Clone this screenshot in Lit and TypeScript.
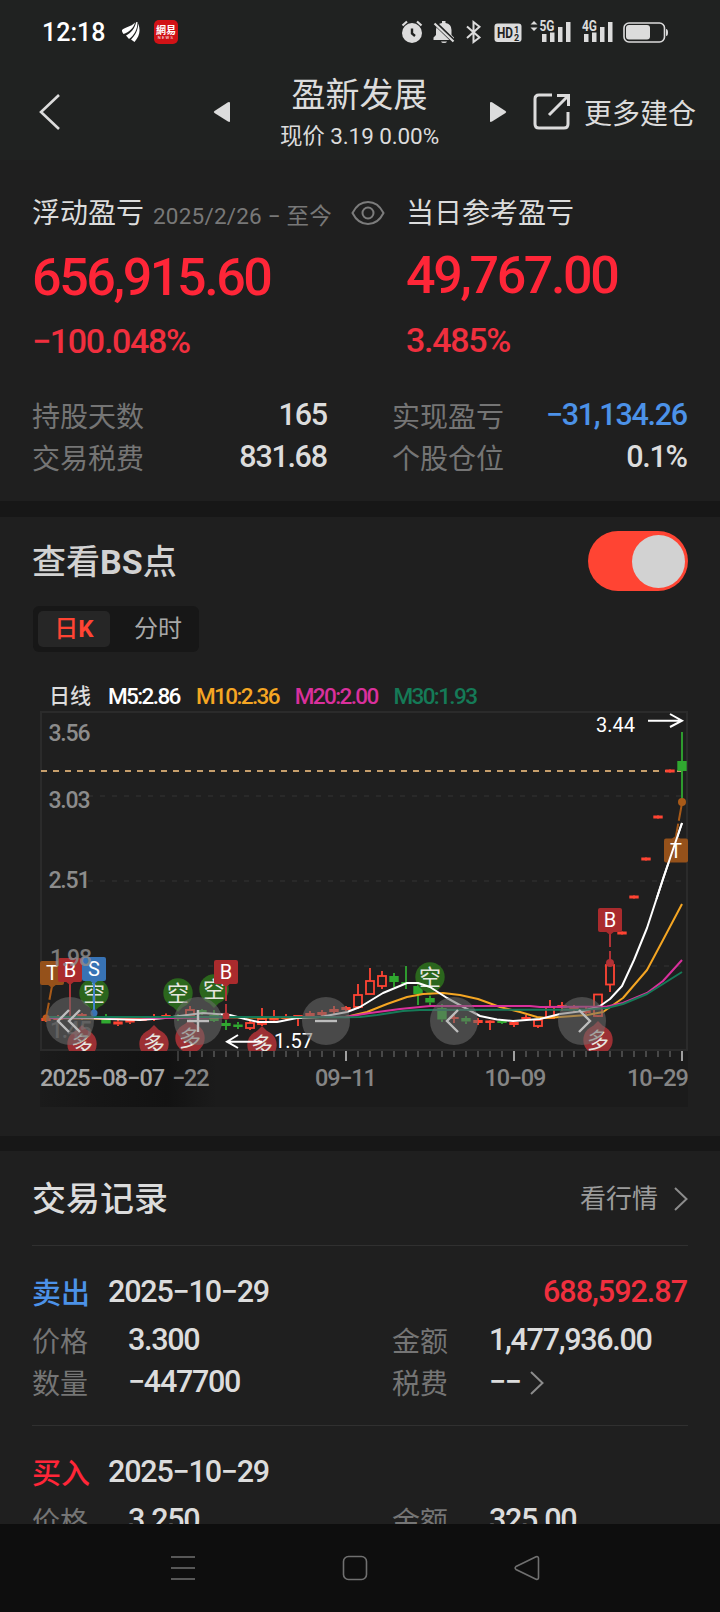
import { LitElement, html, svg, css } from "lit";
import { customElement } from "lit/decorators.js";

const RED = "#ff4433";
const GREEN = "#30a830";

// x, body top, body bottom, wick top, wick bottom, kind (r = hollow red, g = green)
type Candle = [number, number, number, number, number, "r" | "g"];
const candles: Candle[] = [
  [46, 1018, 1021, 1016, 1022, "r"],
  [58, 1017, 1020, 1015, 1021, "r"],
  [70, 1016, 1019, 1014, 1021, "r"],
  [82, 1014, 1017, 1013, 1020, "r"],
  [106, 1019, 1023.5, 1014, 1023.5, "g"],
  [118, 1021.5, 1024.5, 1019, 1026, "r"],
  [130, 1019.5, 1022.5, 1018, 1024, "r"],
  [142, 1018.5, 1021, 1017, 1021, "r"],
  [154, 1016, 1018.5, 1014, 1021, "r"],
  [166, 1015, 1017.5, 1013.5, 1018, "r"],
  [178, 1017, 1019, 1014, 1021, "g"],
  [190, 1010, 1016, 1006, 1016, "r"],
  [202, 1010, 1013, 1009, 1015, "g"],
  [214, 1015, 1021, 1010, 1022, "g"],
  [226, 1023, 1026, 1020, 1030, "g"],
  [238, 1024.5, 1027, 1022, 1029, "g"],
  [250, 1023, 1028, 1021, 1030, "r"],
  [262, 1019, 1024, 1008, 1026, "r"],
  [274, 1018, 1020.5, 1010, 1023, "r"],
  [286, 1016.5, 1019, 1014, 1021, "r"],
  [298, 1015, 1018, 1015, 1026, "r"],
  [310, 1013, 1016, 1011, 1017, "r"],
  [322, 1012, 1015, 1010, 1016, "r"],
  [334, 1009, 1012, 1006, 1014, "r"],
  [346, 1007, 1010, 1006, 1011, "r"],
  [358, 995, 1007, 984, 1009, "r"],
  [370, 981, 994, 968, 994, "r"],
  [382, 976, 986, 971, 989, "r"],
  [394, 976, 982, 973, 987, "g"],
  [406, 982, 984, 966, 989, "g"],
  [418, 986, 994, 984, 1005, "g"],
  [430, 998, 1002.5, 996, 1007, "g"],
  [442, 1008, 1019.5, 1004, 1022, "g"],
  [454, 1017, 1019, 1015, 1023, "r"],
  [466, 1018, 1021.5, 1016, 1024, "g"],
  [478, 1020, 1023, 1018, 1025, "r"],
  [490, 1020.5, 1023, 1020, 1030, "r"],
  [502, 1021, 1023, 1020, 1024, "g"],
  [514, 1022, 1025, 1022, 1027, "r"],
  [526, 1017, 1019.5, 1015, 1020, "r"],
  [538, 1020, 1026, 1020, 1028, "r"],
  [550, 1007, 1018, 1000, 1018, "r"],
  [562, 1005, 1008, 1002, 1011, "r"],
  [574, 1007, 1010, 1005, 1012, "r"],
  [586, 1010, 1013, 1007, 1014, "r"],
  [598, 994.5, 1016, 994, 1017, "r"],
  [610, 965, 984.5, 961, 992, "r"],
  [622, 931.5, 934.5, 933, 933, "r"],
  [634, 895.5, 898.5, 897, 897, "r"],
  [646, 857.5, 860.5, 859, 859, "r"],
  [658, 815.5, 818.5, 817, 817, "r"],
  [670, 769.5, 772.5, 771, 771, "r"],
  [682, 761, 771, 732, 800, "g"],
];

const averages = [
  { color: "#f5a623", pts: "48,1018 120,1019 200,1017 260,1017.5 345,1017 350,1016 367,1012 387,1004 407,997 423,994 443,993 460,995 478,999 500,1007 520,1012 537,1017 547,1018 587,1015 603,1012 623,998 647,970 663,940 682,904" },
  { color: "#ffffff", pts: "48,1018 90,1018 110,1019 140,1020 165,1018 187,1015 203,1013 230,1015 245,1019 258,1022 277,1022 297,1018 320,1017 347,1012 360,1007 383,993 407,983 418,983 430,987 447,998 467,1009 480,1016 497,1019.5 513,1021 540,1019 560,1014 583,1011 600,1006 610,999 622,986 634,960 647,928 663,879 682,823" },
  { color: "#d9309c", pts: "48,1018 100,1017 170,1018 240,1017 345,1017 370,1013 400,1009 430,1006 530,1006 540,1007 607,1006.5 623,1003 647,993 663,981 682,960" },
  { color: "#157a57", pts: "48,1017 200,1017 345,1017.3 360,1017 377,1015 403,1011 420,1010 500,1009.8 585,1009.8 607,1008 623,1004 647,994 682,972" },
];

@customElement("trade-chart")
export class TradeChart extends LitElement {
  static styles = css`
    :host { display: block; height: 400px; }
    svg { display: block; }
    text { font-family: Roboto, "Noto Sans CJK SC", sans-serif; }
    .price { font-size: 23px; fill: #8c8c8c; letter-spacing: -1.2px; font-weight: 500; }
    .date { font-size: 23.5px; fill: #858585; letter-spacing: -1.2px; font-weight: 500; }
    .date.first { fill: #a5a5a5; letter-spacing: -0.9px; }
    .tip { font-size: 20px; fill: #fff; }
    .flag { font-size: 20px; fill: #fff; text-anchor: middle; }
    .pin { font-size: 22px; fill: #e6e6e0; text-anchor: middle; }
  `;

  candle([x, top, bottom, high, low, kind]: Candle) {
    const color = kind === "r" ? RED : GREEN;
    const h = bottom - top;
    const hollow = kind === "r" && h > 4;
    return svg`
      <path d="M${x} ${high}V${top}M${x} ${bottom}V${low}" stroke=${color} stroke-width="2" opacity=".9"/>
      ${hollow
        ? svg`<rect x=${x - 4} y=${top} width="8" height=${h} fill="none" stroke=${color} stroke-width="1.8"/>`
        : svg`<rect x=${x - 4.7} y=${top} width="9.4" height=${h} fill=${color}/>`}`;
  }

  flag(x: number, y: number, label: string, color: string, up = false) {
    const s = up ? -1 : 1;
    return svg`
      <rect x=${x - 12} y=${y - 12} width="24" height="24" rx="2" fill=${color}/>
      <path d="M${x - 5} ${y + s * 11}L${x} ${y + s * 15}L${x + 5} ${y + s * 11}" fill=${color}/>
      <text class="flag" x=${x} y=${y + 7.2}>${label}</text>`;
  }

  shortPin(x: number, y: number) {
    return svg`
      <circle cx=${x} cy=${y} r="14.7" fill="#2b661d"/>
      <path d="M${x - 8} ${y + 11}L${x} ${y + 19}L${x + 8} ${y + 11}" fill="#2b661d"/>
      <text class="pin" x=${x} y=${y + 8}>空</text>`;
  }

  longPin(x: number, y: number) {
    return svg`
      <circle cx=${x} cy=${y} r="14.7" fill="#9c3034"/>
      <path d="M${x - 8} ${y - 11}L${x} ${y - 19}L${x + 8} ${y - 11}" fill="#9c3034"/>
      <text class="pin" x=${x} y=${y + 8}>多</text>`;
  }

  control(x: number, d: string) {
    return svg`
      <circle cx=${x} cy="1021" r="24" fill="#6c6c6c" fill-opacity=".55"/>
      <path d=${d} transform="translate(${x} 1021)" fill="none" stroke="#bdbdbd" stroke-width="2.4"/>`;
  }

  render() {
    const ticks = Array.from({ length: 43 }, (_, i) => 178 + i * 12);
    const major = [178, 346, 514, 682];
    return html`<svg width="720" height="400" viewBox="0 710 720 400">
      <defs>
        <linearGradient id="shade">
          <stop offset="0" stop-color="#121212" stop-opacity="0"/>
          <stop offset=".3" stop-color="#121212" stop-opacity=".5"/>
          <stop offset=".72" stop-color="#121212" stop-opacity="1"/>
          <stop offset="1" stop-color="#121212" stop-opacity="0"/>
        </linearGradient>
        <clipPath id="plot"><rect x="40" y="711" width="650" height="340"/></clipPath>
      </defs>
      <rect x="40" y="1051" width="648" height="56" fill="#1b1b1b"/>
      <rect x="40" y="1051" width="176" height="56" fill="url(#shade)"/>
      <rect x="41" y="712" width="646" height="338" fill="none" stroke="#2b2b2b" stroke-width="2"/>
      <path d="M88 796H687M88 881H687M88 966H687" stroke="#2e2e2e" stroke-width="1.6" stroke-dasharray="5 7"/>
      <path d="M41 771H682" stroke="#c79f6c" stroke-width="2" stroke-dasharray="6 6"/>
      ${ticks.map((x) =>
        major.includes(x)
          ? svg`<path d="M${x} 1051V1061" stroke=${x === 178 ? "#3a3a3a" : "#a0a0a0"} stroke-width="2"/>`
          : svg`<path d="M${x} 1051V1057" stroke="#686868" stroke-width="1.2"/>`
      )}
      <g clip-path="url(#plot)">
        ${candles.map((c) => this.candle(c))}
        ${[[94, 993], [178, 993], [214, 989], [430, 977]].map(([x, y]) => this.shortPin(x, y))}
        ${[[82, 1044], [154, 1044], [190, 1038], [262, 1045], [598, 1040]].map(([x, y]) => this.longPin(x, y))}
        ${averages.map((a) => svg`<polyline points=${a.pts} fill="none" stroke=${a.color} stroke-width="2" stroke-linejoin="round"/>`)}
      </g>
      <path d="M52 986L46 1018" stroke="#a85a18" stroke-width="2" stroke-dasharray="14 3"/>
      <circle cx="46" cy="1018" r="3.5" fill="#c05a1c"/>
      <path d="M70 984V1016" stroke="#b03236" stroke-width="2"/>
      <path d="M94 982V1012" stroke="#4286d0" stroke-width="2"/>
      <circle cx="94" cy="1013" r="3.5" fill="#3873b5"/>
      <path d="M226 985V1015" stroke="#b03236" stroke-width="2" stroke-dasharray="16 3"/>
      <circle cx="226" cy="1016" r="3.5" fill="#b03236"/>
      <path d="M610 934V964" stroke="#b03236" stroke-width="2" stroke-dasharray="13 4"/>
      <circle cx="610" cy="963" r="4" fill="#b03236"/>
      <path d="M682 803L676 836" stroke="#a85a18" stroke-width="2" stroke-dasharray="18 3"/>
      <circle cx="682" cy="802" r="4" fill="#a85a18"/>
      ${this.flag(52, 973, "T", "#95511a")}
      ${this.flag(70, 970, "B", "#aa2b2d")}
      ${this.flag(94, 969, "S", "#3873b5")}
      ${this.flag(226, 972, "B", "#aa2b2d")}
      ${this.flag(610, 920, "B", "#aa2b2d")}
      ${this.flag(676, 850.5, "T", "#95511a", true)}
      <path d="M656.500 899L663 879L682 823" fill="none" stroke="#fff" stroke-width="2"/>
      <text class="price" x="48.500" y="741">3.56</text>
      <text class="price" x="48.500" y="808">3.03</text>
      <text class="price" x="48.500" y="888">2.51</text>
      <text class="price" x="50" y="966" opacity=".85">1.98</text>
      <text class="price" x="50" y="1038" opacity=".5">1.45</text>
      <path d="M648 720.7H681M670 714L682 720.7L670 727" stroke="#fff" stroke-width="2" fill="none"/>
      <text class="tip" x="596" y="732">3.44</text>
      <path d="M228 1041.7H262M238 1035L227 1041.7L238 1048" stroke="#fff" stroke-width="2" fill="none"/>
      <text class="tip" x="274" y="1048">1.57</text>
      ${this.control(70, "M-1 -11L-12 0L-1 11M10 -11L-1 0L10 11")}
      ${this.control(198, "M-11 0H11M0 -11V11")}
      ${this.control(326, "M-11 0H11")}
      ${this.control(454, "M4 -11L-7 0L4 11")}
      ${this.control(582, "M-3 -11L8 0L-3 11")}
      <text class="date" x="172" y="1086">−22</text>
      <text class="date first" x="40" y="1086">2025−08−07</text>
      <text class="date" x="315" y="1086">09−11</text>
      <text class="date" x="484.500" y="1086">10−09</text>
      <text class="date" x="627" y="1086">10−29</text>
    </svg>`;
  }
}

@customElement("status-bar")
export class StatusBar extends LitElement {
  static styles = css`
    :host { display: flex; align-items: center; height: 64px; padding: 0 52px 0 42px; box-sizing: border-box; justify-content: space-between; }
    .left { display: flex; align-items: center; }
    .clock { font-size: 25px; font-weight: 500; color: #fff; letter-spacing: 0px; width: 80px; }
    .news { width: 24px; height: 24px; border-radius: 5px; background: #d11216; color: #fff; margin-left: 14px; display: flex; flex-direction: column; align-items: center; justify-content: center; }
    .news b { font-size: 10px; line-height: 11px; font-weight: 700; }
    .news i { font-size: 4px; line-height: 4px; font-style: normal; letter-spacing: 1.4px; }
    svg { display: block; }
    text { font-family: Roboto, sans-serif; font-weight: 700; }
  `;
  render() {
    return html`
      <div class="left">
        <span class="clock">12:18</span>
        <svg width="18" height="20" viewBox="0 0 18 20" fill="#fff">
          <path d="M0 8C3 5 9 5 13 .5C12 6 7 10 1.500 12C.2 10.500 -.3 9 0 8Z"/>
          <path d="M4 13.500C9 11 13 6.500 14 .3L15.500 0C15.500 7.500 12.500 13 7 17Z"/>
          <path d="M9 17.500C13.500 13 16 8 16.300 1.500C18.800 9 17.500 14 12.500 20Z"/>
        </svg>
        <span class="news"><b>網易</b><i>NEWS</i></span>
      </div>
      <svg width="268" height="26" viewBox="400 19 268 26" fill="#dcdcdc">
        <circle cx="412" cy="33" r="10"/>
        <path d="M412 28.500V33.500L415 36" fill="none" stroke="#202221" stroke-width="2.400"/>
        <path d="M402.500 25.500L407 21.500M421.500 25.500L417 21.500" stroke="#dcdcdc" stroke-width="2.200"/>
        <path d="M433.500 40V37.500L436 35V30Q436 24 442 23V21H445.500V23Q451.500 24 451.500 30V35L454 37.500V40Z"/>
        <path d="M441 41.500H447Q446.500 43 444 43T441 41.500Z"/>
        <path d="M436 24L454 41.500" stroke="#202221" stroke-width="4.500"/>
        <path d="M434.500 23.500L453.500 41.500" stroke="#dcdcdc" stroke-width="2.200"/>
        <path d="M467 26.500L479.500 37.500L473.500 42V22L479.500 26.800L467 38" fill="none" stroke="#dcdcdc" stroke-width="2"/>
        <rect x="494.500" y="23.500" width="27" height="18.500" rx="3"/>
        <text x="497" y="38" font-size="14" fill="#202221" textLength="16" lengthAdjust="spacingAndGlyphs">HD</text>
        <text x="514" y="32.500" font-size="9" fill="#202221">1</text>
        <text x="514" y="40.500" font-size="9" fill="#202221">2</text>
        <path d="M530.500 24.500L534 21L537.500 24.500ZM530.500 27.500L534 31L537.500 27.500Z"/>
        <text x="539.500" y="31" font-size="14" textLength="15" lengthAdjust="spacingAndGlyphs">5G</text>
        <text x="582" y="31" font-size="14" textLength="15" lengthAdjust="spacingAndGlyphs">4G</text>
        <path d="M542 34H546.500V42H542ZM550 32.500H554.500V42H550ZM558 27H562.500V42H558ZM566 22H570.500V42H566Z"/>
        <path d="M584 34H588.500V42H584ZM592 32.500H596.500V42H592ZM600 27H604.500V42H600ZM608 22H612.500V42H608Z"/>
        <rect x="624" y="23" width="40.500" height="19" rx="5" fill="none" stroke="#dcdcdc" stroke-width="1.600"/>
        <rect x="626" y="25" width="24" height="14.500" rx="3"/>
        <path d="M666 29Q668 29 668 32.500T666 36Z"/>
      </svg>`;
  }
}

interface Trade { side: string; sell: boolean; date: string; profit: string; price: string; amount: string; count: string; }

const trades: Trade[] = [
  { side: "卖出", sell: true, date: "2025−10−29", profit: "688,592.87", price: "3.300", amount: "1,477,936.00", count: "−447700" },
  { side: "买入", sell: false, date: "2025−10−29", profit: "", price: "3.250", amount: "325.00", count: "" },
];

@customElement("app-root")
export class AppRoot extends LitElement {
  static styles = css`
    :host { display: flex; flex-direction: column; width: 720px; height: 1612px; overflow: hidden; background: #1f1f1f; color: #dcdcdc; font-family: Roboto, "Noto Sans CJK SC", sans-serif; line-height: 1; white-space: nowrap; }
    * { box-sizing: border-box; }
    svg { display: block; }
    .head { height: 160px; background: #202221; flex: none; }
    .bar { display: grid; grid-template-columns: 213px 24px 243px 36px 1fr; height: 96px; align-items: center; }
    .back { padding-left: 39px; }
    .name { text-align: center; padding: 0 0 0 2px; }
    .name h1 { margin: 0; font-size: 34px; font-weight: 400; line-height: 44px; padding-top: 2px; padding-bottom: 2px; }
    .name p { margin: 0; font-size: 22.500px; line-height: 34px; font-weight: 400; letter-spacing: -0.1px; }
    .more { display: flex; align-items: center; gap: 13px; font-size: 28px; padding-left: 17px; padding-top: 6px; }
    .more svg { margin-top: -6px; }
    .summary { height: 341px; flex: none; padding: 32px 32px 0; }
    .top { display: grid; grid-template-columns: 374px 1fr; height: 172px; }
    .label { display: flex; align-items: center; font-size: 28px; height: 44px; }
    .label .since { font-size: 22.500px; color: #787878; margin-left: 9px; padding-top: 5px; letter-spacing: 0.2px; }
    .label svg { margin-left: 19px; margin-top: -3px; }
    .big { font-size: 52px; font-weight: 500; color: #ff2638; letter-spacing: -2.400px; height: 82px; line-height: 84px; }
    .right .big { line-height: 80px; height: 81px; }
    .pct { font-size: 34px; font-weight: 500; color: #f02f3e; letter-spacing: -1.300px; height: 46px; line-height: 46px; }
    .facts { display: grid; grid-template-columns: 296px 296px; column-gap: 64px; padding-top: 33px; }
    .fact { display: flex; justify-content: space-between; align-items: center; height: 42px; font-size: 28px; color: #757575; }
    .num { font-size: 30.500px; font-weight: 500; color: #dcdcdc; letter-spacing: -1.300px; }
    .fact .num { margin-top: -5px; padding-right: 1.300px; }
    .num.blue { color: #4c92e8; }
    .strip { height: 15.500px; background: #171717; flex: none; }
    .chart { height: 619px; flex: none; }
    .title { display: flex; justify-content: space-between; align-items: center; margin: 0 32px; }
    .title h2 { margin: 0; font-size: 34px; font-weight: 500; padding-top: 2px; }
    .title h2 b { font-weight: 700; }
    .chart .title { height: 89px; color: #d2d2d2; }
    .toggle { width: 100px; height: 60px; border-radius: 30px; background: #ff4433; display: flex; align-items: center; justify-content: flex-end; padding-right: 3px; }
    .knob { width: 53px; height: 53px; border-radius: 50%; background: #d2d2d2; }
    .tabs { display: flex; align-items: center; gap: 12px; width: 166px; height: 46px; margin-left: 33px; padding: 0 5px; border-radius: 6px; background: #171717; font-size: 24px; color: #a8a8a8; }
    .tab { width: 72px; height: 36px; flex: none; display: flex; align-items: center; justify-content: center; border-radius: 5px; }
    .tab.on { background: #262626; color: #ff4433; font-weight: 500; }
    .tab.on b { font-weight: 700; }
    .legend { display: flex; align-items: center; height: 38px; margin: 26px 0 -6px 49px; font-size: 22.500px; font-weight: 500; }
    .legend span { width: 98.700px; letter-spacing: -1.600px; }
    .legend .period { width: 59px; font-size: 21px; letter-spacing: 0; }
    .legend .m5 { width: 88px; color: #fff; }
    .m10 { color: #f5a623; }
    .m20 { color: #d9309c; }
    .m30 { color: #157a57; }
    .log { flex: 1; min-height: 0; overflow: hidden; }
    .log .title { height: 95px; border-bottom: 1.500px solid #303030; }
    .quote { display: flex; align-items: center; gap: 16px; font-size: 26px; color: #9c9c9c; padding-top: 2px; }
    .trade { margin: 0 32px; height: 180px; border-bottom: 1.500px solid #303030; padding-top: 20px; }
    .line { display: flex; align-items: center; height: 56px; }
    .side { font-size: 29px; font-weight: 500; width: 76px; color: #ff2638; }
    .side.sell { color: #4c92e8; }
    .line .num { margin-top: -3px; letter-spacing: -1.200px; }
    .line .profit { margin-left: auto; color: #f02f3e; letter-spacing: -1px; padding-right: 1px; }
    .cells { display: grid; grid-template-columns: 96px 264px 97px 1fr; align-items: center; height: 42px; font-size: 28px; color: #757575; }
    .cells .num { display: flex; align-items: center; gap: 9px; margin-top: -5px; }
    .nav { height: 88px; flex: none; background: #0e0e0e; display: flex; justify-content: space-between; align-items: center; padding: 0 180px 0 170px; }
  `;

  fact(label: string, value: string, tone = "") {
    return html`<div class="fact"><span>${label}</span><span class="num ${tone}">${value}</span></div>`;
  }

  trade(t: Trade) {
    return html`<div class="trade">
      <div class="line">
        <span class="side ${t.sell ? "sell" : ""}">${t.side}</span>
        <span class="num">${t.date}</span>
        <span class="num profit">${t.profit}</span>
      </div>
      <div class="cells"><span>价格</span><span class="num">${t.price}</span><span>金额</span><span class="num">${t.amount}</span></div>
      ${t.count
        ? html`<div class="cells"><span>数量</span><span class="num">${t.count}</span><span>税费</span>
        <span class="num">−−<svg width="14" height="24" viewBox="0 0 14 24" fill="none" stroke="#8c8c8c" stroke-width="2"><path d="M1 1L12.500 12L1 23"/></svg></span></div>`
        : ""}
    </div>`;
  }

  render() {
    return html`
      <div class="head">
        <status-bar></status-bar>
        <div class="bar">
          <div class="back"><svg width="22" height="36" viewBox="0 0 22 36" fill="none" stroke="#dcdcdc" stroke-width="2.600"><path d="M20 1L2 18L20 35"/></svg></div>
          <svg width="18" height="22" viewBox="0 0 18 22" fill="#dcdcdc"><path d="M1.500 10L15 1.200Q17 .5 17 2V20Q17 21.500 15 20.500L1.500 12Q0 11 1.500 10Z"/></svg>
          <div class="name"><h1>盈新发展</h1><p>现价 3.19 0.00%</p></div>
          <svg width="36" height="22" viewBox="0 0 36 22" fill="#dcdcdc"><path d="M25.500 10L12 1.200Q10 .5 10 2V20Q10 21.500 12 20.500L25.500 12Q27 11 25.500 10Z"/></svg>
          <div class="more">
            <svg width="38" height="38" viewBox="0 0 38 38" fill="none" stroke="#dcdcdc" stroke-width="3"><path d="M19 2H6Q2 2 2 6V31Q2 35 6 35H31Q35 35 35 31V19M16 22L34 4M24 2.500H35.500V13"/></svg>
            更多建仓
          </div>
        </div>
      </div>
      <div class="summary">
        <div class="top">
          <div>
            <div class="label">浮动盈亏<span class="since">2025/2/26 − 至今</span>
              <svg width="34" height="26" viewBox="0 0 34 26" fill="none" stroke="#7c7c7c" stroke-width="2"><path d="M1.500 13Q7 2 17 2T32.500 13Q27 24 17 24T1.500 13Z"/><circle cx="17" cy="13" r="5.500"/></svg>
            </div>
            <div class="big">656,915.60</div>
            <div class="pct">−100.048%</div>
          </div>
          <div class="right">
            <div class="label">当日参考盈亏</div>
            <div class="big">49,767.00</div>
            <div class="pct">3.485%</div>
          </div>
        </div>
        <div class="facts">
          ${this.fact("持股天数", "165")}${this.fact("实现盈亏", "−31,134.26", "blue")}
          ${this.fact("交易税费", "831.68")}${this.fact("个股仓位", "0.1%")}
        </div>
      </div>
      <div class="strip"></div>
      <div class="chart">
        <div class="title"><h2>查看<b>BS</b>点</h2><div class="toggle"><div class="knob"></div></div></div>
        <div class="tabs"><span class="tab on">日<b>K</b></span><span class="tab">分时</span></div>
        <div class="legend"><span class="period">日线</span><span class="m5">M5:2.86</span><span class="m10">M10:2.36</span><span class="m20">M20:2.00</span><span class="m30">M30:1.93</span></div>
        <trade-chart></trade-chart>
      </div>
      <div class="strip"></div>
      <div class="log">
        <div class="title"><h2>交易记录</h2>
          <div class="quote">看行情<svg width="14" height="24" viewBox="0 0 14 24" fill="none" stroke="#8c8c8c" stroke-width="2"><path d="M1 1L12.500 12L1 23"/></svg></div></div>
        ${trades.map((t) => this.trade(t))}
      </div>
      <div class="nav">
        <svg width="26" height="26" viewBox="0 0 26 26" stroke="#707070" stroke-width="1.600"><path d="M1 2H25M1 13H25M1 24H25"/></svg>
        <svg width="26" height="26" viewBox="0 0 26 26" fill="none" stroke="#707070" stroke-width="1.600"><rect x="1.500" y="1.500" width="23" height="23" rx="5"/></svg>
        <svg width="26" height="26" viewBox="0 0 26 26" fill="none" stroke="#707070" stroke-width="1.600"><path d="M2 11.500L22 1.800Q24.500 1 24.500 3.500V22.500Q24.500 25 22 24.200L2 14.500Q.3 13 2 11.500Z"/></svg>
      </div>`;
  }
}
